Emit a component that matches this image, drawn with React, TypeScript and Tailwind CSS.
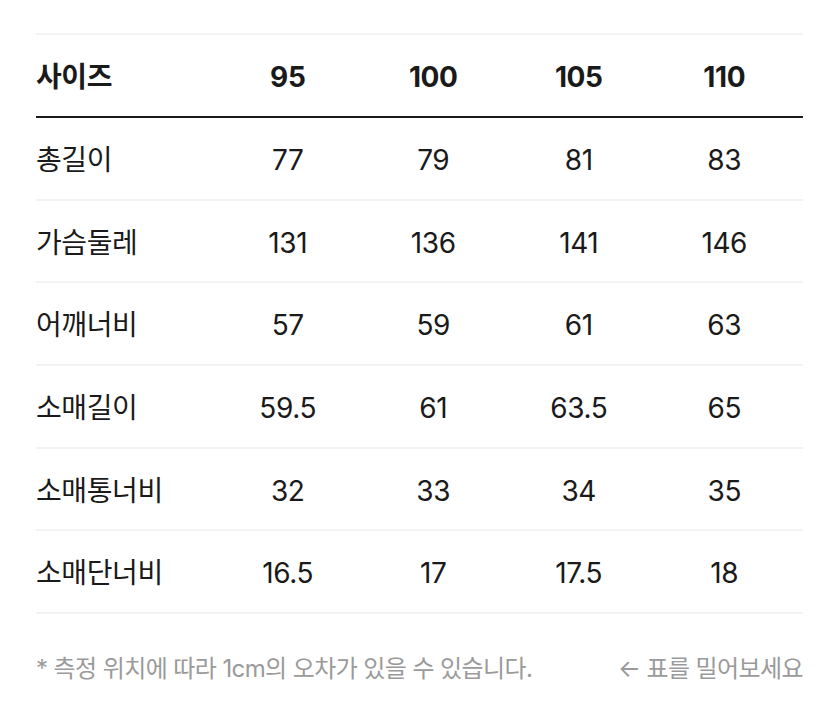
import React from "react";

const headers = ["95", "100", "105", "110"];
const rows: [string, string[]][] = [
  ["총길이", ["77", "79", "81", "83"]],
  ["가슴둘레", ["131", "136", "141", "146"]],
  ["어깨너비", ["57", "59", "61", "63"]],
  ["소매길이", ["59.5", "61", "63.5", "65"]],
  ["소매통너비", ["32", "33", "34", "35"]],
  ["소매단너비", ["16.5", "17", "17.5", "18"]],
];

const font = { fontFamily: 'Inter, "Noto Sans CJK KR", sans-serif' };

export default function App() {
  return (
    <div className="min-h-screen bg-white pt-[33px] px-[36px] text-[#1a1a1a]" style={font}>
      <div className="w-[767px]">
        <div className="grid grid-cols-[179px_repeat(4,1fr)] pr-[6px] pt-[3px] h-[85px] items-center border-t-2 border-[#f3f3f3] border-b-2 border-b-[#1a1a1a] text-[28px] font-bold tracking-[-0.4px]">
          <div>사이즈</div>
          {headers.map((h) => (
            <div key={h} className="text-center">{h}</div>
          ))}
        </div>
        {rows.map(([label, vals]) => (
          <div
            key={label}
            className="grid grid-cols-[179px_repeat(4,1fr)] pr-[6px] pt-[3px] h-[82.7px] items-center border-b-2 border-[#f3f3f3] text-[28px] tracking-[-0.4px]"
          >
            <div>{label}</div>
            {vals.map((v, i) => (
              <div key={i} className="text-center">{v}</div>
            ))}
          </div>
        ))}
        <div className="flex justify-between items-center mt-[37px] text-[24px] text-[#9a9a9a] tracking-[-0.6px]">
          <span>* 측정 위치에 따라 1cm의 오차가 있을 수 있습니다.</span>
          <span>← 표를 밀어보세요</span>
        </div>
      </div>
    </div>
  );
}
